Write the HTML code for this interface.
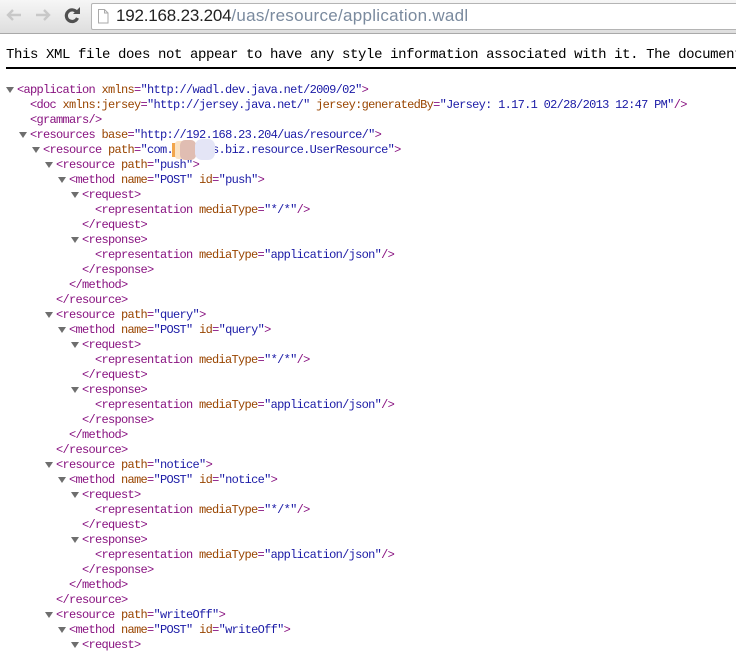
<!DOCTYPE html>
<html><head><meta charset="utf-8">
<style>
html,body{margin:0;padding:0;background:#fff;width:736px;height:654px;overflow:hidden}
#bar{position:absolute;left:0;top:0;width:736px;height:33px;background:linear-gradient(#f6f6f6,#dedede);border-bottom:1px solid #a9a9a9}
#url{position:absolute;left:91px;top:3px;width:650px;height:25px;background:#fff;border:1px solid #b4b4b4;border-radius:2px;box-sizing:content-box}
#urltext{position:absolute;left:116px;top:4px;font:17px/24px "Liberation Sans",sans-serif;color:#7a8a9e;white-space:nowrap;letter-spacing:.28px}
#urltext b{font-weight:normal;color:#222;letter-spacing:-.2px}
#warn{position:absolute;left:6px;top:46px;width:730px;overflow:hidden;white-space:nowrap;font:14px/18px "Liberation Mono",monospace;letter-spacing:-.4px;color:#000}
#hr{position:absolute;left:6px;top:67px;width:730px;height:2px;background:#000}
#x{position:absolute;left:0;top:83px;width:736px;font:12px/15px "Liberation Mono",monospace;letter-spacing:-.7px;color:#881280}
#x div{height:15px;white-space:pre;position:relative}
i{font-style:normal;color:#994500}
u{text-decoration:none;color:#1a1aa6}
s{text-decoration:none;position:absolute;width:0;height:0;top:4px;margin-left:-11px;border-left:4px solid transparent;border-right:4px solid transparent;border-top:6px solid #6e6e6e}
.p0{padding-left:17px}.p1{padding-left:30px}.p2{padding-left:43px}.p3{padding-left:56px}.p4{padding-left:69px}.p5{padding-left:82px}.p6{padding-left:95px}
</style></head><body>
<div id="bar"></div>
<svg style="position:absolute;left:0;top:0" width="90" height="33">
<path d="M21 15H8M13 10l-5 5 5 5" fill="none" stroke="#c8c8c8" stroke-width="2.4"/>
<path d="M36 15h13M44 10l5 5-5 5" fill="none" stroke="#c8c8c8" stroke-width="2.4"/>
<path d="M77 12.500A5.800 5.800 0 1 0 77.500 18" fill="none" stroke="#505050" stroke-width="3.200"/>
<path d="M73 14h7v-7z" fill="#505050"/>
</svg>
<div id="url"></div>
<svg style="position:absolute;left:97px;top:8px" width="13" height="17"><path d="M1.500 1.500h6l3.500 3.500v10h-9.500zM7.500 1.500v3.500h3.500" fill="#fff" stroke="#aaa"/></svg>
<div id="urltext"><b>192.168.23.204</b>/uas/resource/application.wadl</div>
<div id="warn">This XML file does not appear to have any style information associated with it. The document tree is shown below.</div>
<div id="hr"></div>
<div id="x">
<div class="p0"><s></s>&lt;application <i>xmlns</i>=<u>"http://wadl.dev.java.net/2009/02"</u>&gt;</div>
<div class="p1">&lt;doc <i>xmlns:jersey</i>=<u>"http://jersey.java.net/"</u> <i>jersey:generatedBy</i>=<u>"Jersey: 1.17.1 02/28/2013 12:47 PM"</u>/&gt;</div>
<div class="p1">&lt;grammars/&gt;</div>
<div class="p1"><s></s>&lt;resources <i>base</i>=<u>"http://192.168.23.204/uas/resource/"</u>&gt;</div>
<div class="p2"><s></s>&lt;resource <i>path</i>=<u>"com.xxxxxxs.biz.resource.UserResource"</u>&gt;</div>
<div class="p3"><s></s>&lt;resource <i>path</i>=<u>"push"</u>&gt;</div>
<div class="p4"><s></s>&lt;method <i>name</i>=<u>"POST"</u> <i>id</i>=<u>"push"</u>&gt;</div>
<div class="p5"><s></s>&lt;request&gt;</div>
<div class="p6">&lt;representation <i>mediaType</i>=<u>"*/*"</u>/&gt;</div>
<div class="p5">&lt;/request&gt;</div>
<div class="p5"><s></s>&lt;response&gt;</div>
<div class="p6">&lt;representation <i>mediaType</i>=<u>"application/json"</u>/&gt;</div>
<div class="p5">&lt;/response&gt;</div>
<div class="p4">&lt;/method&gt;</div>
<div class="p3">&lt;/resource&gt;</div>
<div class="p3"><s></s>&lt;resource <i>path</i>=<u>"query"</u>&gt;</div>
<div class="p4"><s></s>&lt;method <i>name</i>=<u>"POST"</u> <i>id</i>=<u>"query"</u>&gt;</div>
<div class="p5"><s></s>&lt;request&gt;</div>
<div class="p6">&lt;representation <i>mediaType</i>=<u>"*/*"</u>/&gt;</div>
<div class="p5">&lt;/request&gt;</div>
<div class="p5"><s></s>&lt;response&gt;</div>
<div class="p6">&lt;representation <i>mediaType</i>=<u>"application/json"</u>/&gt;</div>
<div class="p5">&lt;/response&gt;</div>
<div class="p4">&lt;/method&gt;</div>
<div class="p3">&lt;/resource&gt;</div>
<div class="p3"><s></s>&lt;resource <i>path</i>=<u>"notice"</u>&gt;</div>
<div class="p4"><s></s>&lt;method <i>name</i>=<u>"POST"</u> <i>id</i>=<u>"notice"</u>&gt;</div>
<div class="p5"><s></s>&lt;request&gt;</div>
<div class="p6">&lt;representation <i>mediaType</i>=<u>"*/*"</u>/&gt;</div>
<div class="p5">&lt;/request&gt;</div>
<div class="p5"><s></s>&lt;response&gt;</div>
<div class="p6">&lt;representation <i>mediaType</i>=<u>"application/json"</u>/&gt;</div>
<div class="p5">&lt;/response&gt;</div>
<div class="p4">&lt;/method&gt;</div>
<div class="p3">&lt;/resource&gt;</div>
<div class="p3"><s></s>&lt;resource <i>path</i>=<u>"writeOff"</u>&gt;</div>
<div class="p4"><s></s>&lt;method <i>name</i>=<u>"POST"</u> <i>id</i>=<u>"writeOff"</u>&gt;</div>
<div class="p5"><s></s>&lt;request&gt;</div>
</div>
<div style="position:absolute;left:172px;top:143px;width:8px;height:14px;background:#f2a64c"></div>
<div style="position:absolute;left:175px;top:141px;width:20px;height:18px;background:#fbe3c4;border-radius:3px"></div>
<div style="position:absolute;left:180px;top:140px;width:16px;height:20px;background:#e0bdb2;border-radius:5px"></div>
<div style="position:absolute;left:195px;top:139px;width:20px;height:21px;background:#e4e5f6;border-radius:7px"></div>
</body></html>
